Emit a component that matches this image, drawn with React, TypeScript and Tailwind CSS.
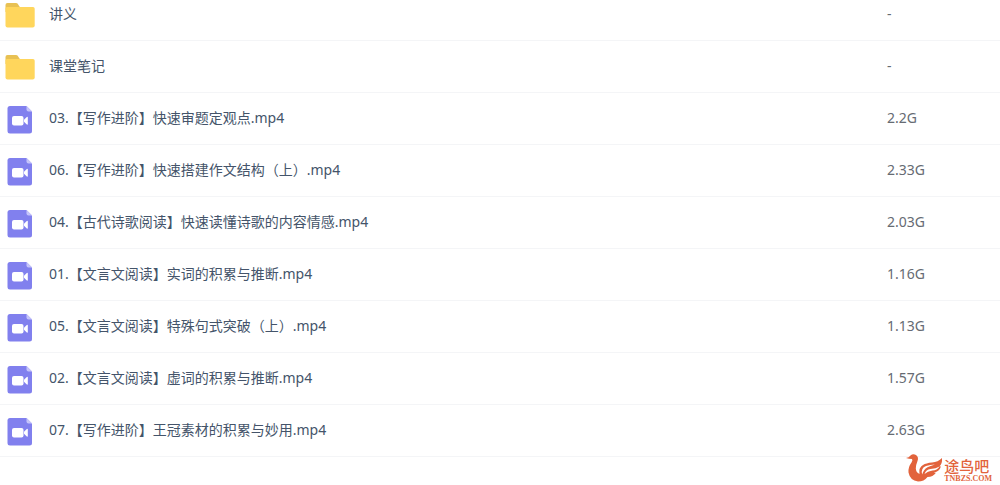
type Entry = { name: string; size: string; kind: 'folder' | 'video' };

const entries: Entry[] = [
  { name: '讲义', size: '-', kind: 'folder' },
  { name: '课堂笔记', size: '-', kind: 'folder' },
  { name: '03.【写作进阶】快速审题定观点.mp4', size: '2.2G', kind: 'video' },
  { name: '06.【写作进阶】快速搭建作文结构（上）.mp4', size: '2.33G', kind: 'video' },
  { name: '04.【古代诗歌阅读】快速读懂诗歌的内容情感.mp4', size: '2.03G', kind: 'video' },
  { name: '01.【文言文阅读】实词的积累与推断.mp4', size: '1.16G', kind: 'video' },
  { name: '05.【文言文阅读】特殊句式突破（上）.mp4', size: '1.13G', kind: 'video' },
  { name: '02.【文言文阅读】虚词的积累与推断.mp4', size: '1.57G', kind: 'video' },
  { name: '07.【写作进阶】王冠素材的积累与妙用.mp4', size: '2.63G', kind: 'video' },
];

function FolderIcon() {
  return (
    <svg viewBox="0 -2 30 28" className="h-7 w-[30px] shrink-0" aria-hidden="true">
      <path d="M.5 3Q.5 1 2.500 1H11Q12 1 12.700 1.800L14.500 4.500V10H.5Z" fill="#e8c153" />
      <path d="M.5 6.500Q.5 5 2 5H28Q29.700 5 29.700 6.700V23.500Q29.700 25.500 27.700 25.500H2.500Q.5 25.500 .5 23.500Z" fill="#ffd65c" />
    </svg>
  );
}

function VideoIcon() {
  return (
    <svg viewBox="0 0 30 32" className="h-8 w-[30px] shrink-0" aria-hidden="true">
      <path d="M5 4H21.500L27 9.500V29Q27 31.500 24.500 31.500H5Q2.500 31.500 2.500 29V6.500Q2.500 4 5 4Z" fill="#8180ee" />
      <path d="M21.500 4L27 9.500H23.500Q21.500 9.500 21.500 7.500Z" fill="#c5c4fa" />
      <rect x="7" y="14" width="11.500" height="9.500" rx="2" fill="#fff" />
      <path d="M19 17.700L21.800 15Q22.800 14.500 22.800 15.500V22Q22.800 23 21.800 22.500L19 19.800Z" fill="#fff" />
    </svg>
  );
}

function Logo() {
  return (
    <div className="absolute right-2 bottom-0.5 flex items-end gap-px text-[#e2633c]">
      <svg viewBox="0 0 38 29" className="h-[30px] w-[38px]" aria-hidden="true">
        <path
          d="M1 4.500Q4 4 5.500 2Q8 0 11 1.500Q14 3.500 12.500 7.500Q11 11 10.800 15Q11 19 14.500 20.500Q13.500 14 18 11.500Q21 9.500 27 9Q33 8.500 37 4.500Q37.500 10 34.500 13Q35.500 13 36 12.800Q34.500 18 29 19Q30 19.500 31 19.300Q28 23.500 22.500 23.500Q19 28 13 28Q5 27 3.500 19Q3 13.500 6.500 9Q8 6.500 7 5.500Q4 5.500 1 4.500Z"
          fill="#e2633c"
        />
        <path d="M17.200 21Q15.500 14.500 21 12.500Q25 11.300 30 11Q25 12.500 22.500 13.800Q18.500 16 17.200 21Z" fill="#fff" />
        <path d="M19.500 20.500Q21 16 25.500 15.500Q31 15 34.500 13Q32 16.800 27.500 17Q22.500 17.500 19.500 20.500Z" fill="#fff" />
      </svg>
      <div className="flex flex-col">
        <span className="text-[15px] leading-[18px] font-medium">途鸟吧</span>
        <span className="font-['Liberation_Serif',serif] text-[8px] leading-2 font-bold">TNBZS.COM</span>
      </div>
    </div>
  );
}

export default function App() {
  return (
    <main className="relative min-h-screen overflow-hidden bg-white font-['Noto_Sans','Noto_Sans_CJK_SC',sans-serif] text-sm">
      <table className="-mt-3 w-full table-fixed border-collapse text-left">
        <colgroup>
          <col />
          <col className="w-[113px]" />
        </colgroup>
        <tbody>
          {entries.map((entry) => (
            <tr key={entry.name} className="h-[52px] border-b border-[#f4f5f7]">
              <td className="p-0 pl-[5px]">
                <div className="flex items-center gap-3.5">
                  {entry.kind === 'folder' ? <FolderIcon /> : <VideoIcon />}
                  <a href="#" className="text-[#44546a]">{entry.name}</a>
                </div>
              </td>
              <td className="p-0 text-[#666b73]">{entry.size}</td>
            </tr>
          ))}
        </tbody>
      </table>
      <Logo />
    </main>
  );
}
